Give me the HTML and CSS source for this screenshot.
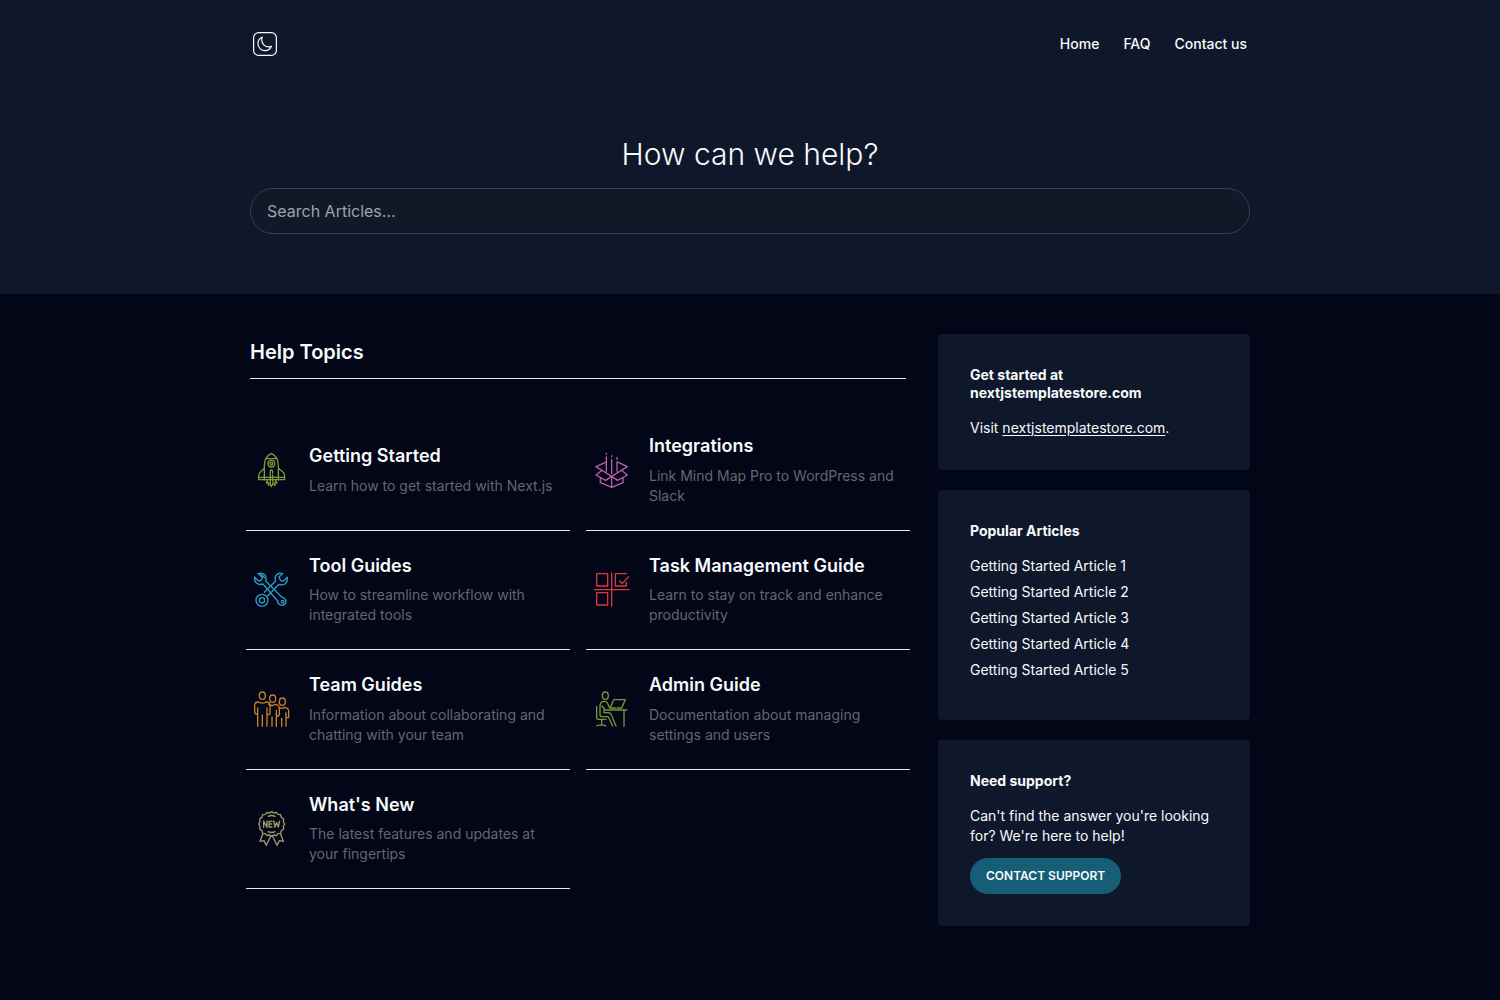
FILE: index.html
```html
<!DOCTYPE html>
<html lang="en">
<head>
  <meta charset="utf-8">
  <meta name="viewport" content="width=device-width, initial-scale=1">
  <title>Help Center</title>
  <link rel="stylesheet" href="styles.css">
</head>
<body>
  <header class="hero">
    <div class="container">
      <div class="topbar">
        <button class="theme-toggle" type="button" aria-label="Toggle dark mode">
          <svg viewBox="0 0 24 24" aria-hidden="true">
            <rect x="0.6" y="0.6" width="22.8" height="22.8" rx="5"/>
            <path transform="translate(2.8 3.5) scale(0.72)" stroke-width="1.6" d="M21.752 15.002A9.718 9.718 0 0118 15.75c-5.385 0-9.75-4.365-9.75-9.75 0-1.33.266-2.597.748-3.752A9.753 9.753 0 003 11.25C3 16.635 7.365 21 12.75 21a9.753 9.753 0 009.002-5.998z"/>
          </svg>
        </button>
        <nav class="nav" aria-label="Main">
          <a href="#">Home</a>
          <a href="#">FAQ</a>
          <a href="#">Contact us</a>
        </nav>
      </div>
      <h1 class="hero-title">How can we help?</h1>
      <form class="search" role="search">
        <input class="search-input" type="search" placeholder="Search Articles..." aria-label="Search Articles">
      </form>
    </div>
  </header>

  <div class="container content">
    <main>
      <h2 class="section-title">Help Topics</h2>
      <div class="topics">
        <a class="topic" href="#">
          <svg class="topic-icon green" viewBox="12 13 108 108" aria-hidden="true">
            <path d="M43 97V54C43 36 52 23 64 17C76 23 85 36 85 54V97M50 33H78M43 62L32 72Q26 77 26 85V96H104V85Q104 77 98 72L85 62M27 89H103M61 97V70Q64 64 68 70V76M68 82V97M52 98L49 106L55 104V113L61 108L64 117L69 108L75 113V104L81 106L77 98M61 100V107M69 100V107"/>
            <circle cx="64" cy="48" r="10"/><circle cx="64" cy="48" r="4"/>
          </svg>
          <div><h3>Getting Started</h3><p>Learn how to get started with Next.js</p></div>
        </a>
        <a class="topic" href="#">
          <svg class="topic-icon purple" viewBox="12 13 108 108" aria-hidden="true">
            <path d="M46 44L18 57L36 68L18 82L47 98L65 86L83 98L112 82L94 68L112 57L85 44M36 68L65 86L94 68M31 92V105L65 119L99 105V92M65 88V118M49 28V71M65 36V78M81 42V71M49 17V20M65 24V27M81 29V35"/>
          </svg>
          <div><h3>Integrations</h3><p>Link Mind Map Pro to WordPress and Slack</p></div>
        </a>
        <a class="topic" href="#">
          <svg class="topic-icon blue" viewBox="12 12 108 108" aria-hidden="true">
            <path d="M24 17L37 28L34 37L25 39L14 27Q12 39 20 46Q28 52 39 48L83 99M24 17Q35 13 44 20Q51 28 47 39L96 88M33 18L44 29"/>
            <path d="M98 17L87 27L91 37L100 40L112 28Q114 40 106 47Q98 53 87 49L53 84M98 17Q86 13 79 21Q73 29 77 39L43 73"/>
            <circle cx="36" cy="97" r="18"/><circle cx="36" cy="97" r="8"/>
            <path d="M83 99Q82 106 90 110Q98 115 105 108Q111 102 106 94Q102 88 96 88"/><circle cx="98" cy="101" r="4"/>
          </svg>
          <div><h3>Tool Guides</h3><p>How to streamline workflow with integrated tools</p></div>
        </a>
        <a class="topic" href="#">
          <svg class="topic-icon red" viewBox="12 12 108 108" aria-hidden="true">
            <path d="M20 17H53V54H20ZM20 74H53V111H20ZM109 17H76V54H109V43M65 15V115M12 65H117M89 39L97 47L116 26"/>
          </svg>
          <div><h3>Task Management Guide</h3><p>Learn to stay on track and enhance productivity</p></div>
        </a>
        <a class="topic" href="#">
          <svg class="topic-icon orange" viewBox="12 10 108 108" aria-hidden="true">
            <ellipse cx="37" cy="24" rx="9" ry="11"/><ellipse cx="68" cy="33" rx="9" ry="11"/><ellipse cx="97" cy="42" rx="9" ry="11"/>
            <path d="M23 116V61M23 80Q14 80 14 73V54Q14 43 25 43Q37 50 49 43Q60 43 60 54V77Q60 81 51 81M51 61V116M37 82V116M56 50Q68 57 75 50Q86 50 88 60V80Q87 86 79 86M79 68V116M66 88V116M87 59Q97 65 104 59Q115 60 116 70V90H108M108 75V116M95 92V116"/>
          </svg>
          <div><h3>Team Guides</h3><p>Information about collaborating and chatting with your team</p></div>
        </a>
        <a class="topic" href="#">
          <svg class="topic-icon olive" viewBox="12 10 108 108" aria-hidden="true">
            <ellipse cx="46" cy="24" rx="9" ry="11"/>
            <path d="M39 42Q30 44 30 55V82Q30 87 37 87H55L68 115M39 42Q48 39 52 46L59 61H76M36 55L45 67H66M42 68V75H56Q61 76 64 82L78 115M20 56V91Q20 95 26 95H48M35 95V113M20 115Q35 108 48 115M62 57L71 36H106L95 61H81M68 67H110M102 68V116"/>
          </svg>
          <div><h3>Admin Guide</h3><p>Documentation about managing settings and users</p></div>
        </a>
        <a class="topic" href="#">
          <svg class="topic-icon khaki" viewBox="12 15 108 108" aria-hidden="true">
            <path d="M65 17L71 21L79 19L84 25L92 26L94 34L101 39L100 47L104 54L100 61L101 69L94 74L92 82L84 83L79 89L71 87L65 91L59 87L51 89L46 83L38 82L36 74L29 69L30 61L26 54L30 47L29 39L36 34L38 26L46 25L51 19L59 21Z"/>
            <path d="M55 31Q65 26 75 31M55 77Q65 82 75 77M41 64V45L51 64V45M66 46H57V63H66M57 54H65M71 45L75 63L80 49L85 63L89 45M38 85L30 106L42 104L49 118L62 91M92 85L100 106L88 104L81 118L68 91"/>
          </svg>
          <div><h3>What's New</h3><p>The latest features and updates at your fingertips</p></div>
        </a>
      </div>
    </main>

    <aside class="sidebar">
      <section class="card">
        <h2>Get started at nextjstemplatestore.com</h2>
        <p>Visit <a class="underlined" href="#">nextjstemplatestore.com</a>.</p>
      </section>
      <section class="card">
        <h2>Popular Articles</h2>
        <ul class="articles">
          <li><a href="#">Getting Started Article 1</a></li>
          <li><a href="#">Getting Started Article 2</a></li>
          <li><a href="#">Getting Started Article 3</a></li>
          <li><a href="#">Getting Started Article 4</a></li>
          <li><a href="#">Getting Started Article 5</a></li>
        </ul>
      </section>
      <section class="card">
        <h2>Need support?</h2>
        <p>Can't find the answer you're looking for? We're here to help!</p>
        <button class="support-button" type="button">CONTACT SUPPORT</button>
      </section>
    </aside>
  </div>
</body>
</html>
```

FILE: styles.css
```css
* { box-sizing: border-box; }

body {
  margin: 0;
  background: #020617;
  color: #f8fafc;
  font-family: Inter, "Liberation Sans", sans-serif;
  font-size: 14px;
  line-height: 20px;
}

h1, h2, h3, p, ul { margin: 0; }
a { color: inherit; text-decoration: none; }
button, input { font-family: inherit; }

.container { max-width: 1000px; margin: 0 auto; }

.hero { background: #0f172a; padding: 32px 0 60px; }

.topbar {
  display: flex;
  align-items: center;
  justify-content: space-between;
  padding: 0 3px;
}

.theme-toggle {
  width: 24px;
  height: 24px;
  padding: 0;
  border: 0;
  background: none;
  color: #f8fafc;
}

.theme-toggle svg {
  display: block;
  fill: none;
  stroke: currentColor;
  stroke-width: 1.2;
  stroke-linejoin: round;
}

.nav { display: flex; gap: 24px; font-weight: 500; }

.hero-title {
  margin: 80px 0 16px;
  font-size: 30px;
  line-height: 36px;
  font-weight: 300;
  text-align: center;
}

.search-input {
  display: block;
  width: 100%;
  height: 46px;
  padding: 0 16px;
  border: 1px solid #374151;
  border-radius: 23px;
  background: #111827;
  color: #f8fafc;
  font-size: 16px;
  appearance: none;
}

.search-input::placeholder { color: #9ca3af; opacity: 1; }

.content {
  display: grid;
  grid-template-columns: minmax(0, 1fr) 312px;
  gap: 32px;
  align-items: start;
  padding: 40px 0 74px;
}

.section-title {
  padding: 4px 0 12px;
  border-bottom: 1px solid #e5e7eb;
  font-size: 20px;
  line-height: 28px;
  font-weight: 600;
}

.topics {
  display: grid;
  grid-template-columns: repeat(2, minmax(0, 1fr));
  column-gap: 16px;
  margin: 32px -4px 0;
}

.topic {
  display: flex;
  align-items: center;
  gap: 19px;
  padding: 24px 8px;
  border-bottom: 1px solid #e5e7eb;
}

.topic h3 {
  margin-bottom: 8px;
  font-size: 18px;
  line-height: 1.25;
  font-weight: 600;
}

.topic p { color: #64666f; }

.topic-icon {
  flex: none;
  width: 36px;
  height: 36px;
  fill: none;
  stroke: currentColor;
  stroke-width: 4;
  stroke-linecap: round;
  stroke-linejoin: round;
}

.green { color: #7b9c3c; }
.purple { color: #b45fab; }
.blue { color: #2b9cc4; }
.red { color: #d63a3f; }
.orange { color: #c98028; }
.olive { color: #769638; }
.khaki { color: #a3986b; }

.sidebar { display: grid; gap: 20px; }

.card { padding: 32px; border-radius: 4px; background: #0f172a; }

.card h2 {
  margin-bottom: 16px;
  font-size: 14px;
  line-height: 18px;
  font-weight: 700;
}

.underlined { text-decoration: underline; text-underline-offset: 2px; }

.articles {
  display: grid;
  gap: 6px;
  padding: 0 0 8px;
  list-style: none;
}

.support-button {
  display: block;
  height: 36px;
  margin-top: 12px;
  padding: 0 16px 1px;
  border: 0;
  border-radius: 18px;
  background: #155e75;
  color: #f8fafc;
  font-size: 12px;
  font-weight: 600;
}

@media (max-width: 1040px) {
  .container { padding-right: 20px; padding-left: 20px; }
}

@media (max-width: 800px) {
  .content { grid-template-columns: minmax(0, 1fr); }
}

@media (max-width: 560px) {
  .topics { grid-template-columns: minmax(0, 1fr); }
}
```
